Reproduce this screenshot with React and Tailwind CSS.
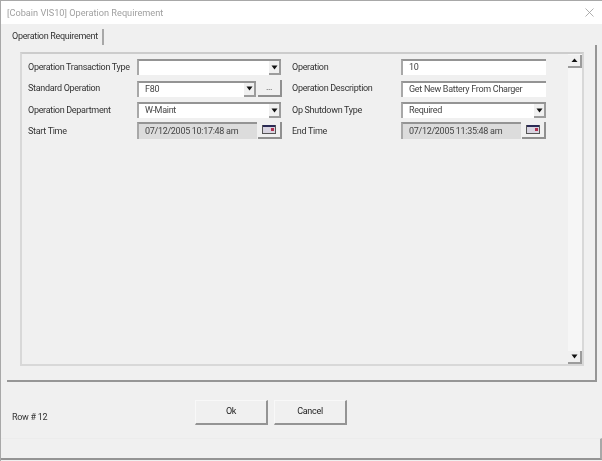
import React from "react";

const textCls = "whitespace-nowrap text-[9px] tracking-[-0.3px]";

const Arrow = ({ up }) => (
  <svg width="7" height="5" viewBox="0 0 7 5" className="block">
    {up ? <path d="M3.5 0.5 L6.5 4 L0.5 4 Z" fill="#111" /> : <path d="M0.5 0.5 L6.5 0.5 L3.5 4.5 Z" fill="#111" />}
  </svg>
);

const Label = ({ w, className = "pt-[1px]", children }) => (
  <div className={`${w} shrink-0 text-[#333] ${className} ${textCls}`}>{children}</div>
);

const Sunken = ({ className = "", children }) => (
  <div className={`h-[16px] shrink-0 flex items-center bg-white border-t-2 border-l-2 border-t-[#949494] border-l-[#a8a8a8] text-[#444] ${textCls} ${className}`}>
    {children}
  </div>
);

const ArrowBtn = () => (
  <div className="ml-auto w-[12px] h-[14px] flex items-center justify-center bg-[#f0f0f0] border-r-2 border-b-2 border-r-[#9c9c9c] border-b-[#9c9c9c]">
    <Arrow />
  </div>
);

const Combo = ({ w, value }) => (
  <Sunken className={w}>
    <span className="pl-[6px]">{value}</span>
    <ArrowBtn />
  </Sunken>
);

const Text = ({ value }) => (
  <Sunken className="w-[145px]">
    <span className="pl-[6px]">{value}</span>
  </Sunken>
);

const CalBtn = () => (
  <div className="ml-[1px] w-[24px] h-[17px] flex items-center justify-center bg-[#f0f0f0] border-r-2 border-b-2 border-r-[#909090] border-b-[#909090]">
    <svg width="14" height="9" viewBox="0 0 14 9" className="block">
      <rect x="0" y="0" width="14" height="9" fill="#d8d4e0" />
      <rect x="0" y="0" width="14" height="2" fill="#2a2a55" />
      <rect x="0" y="0" width="1" height="9" fill="#555" />
      <rect x="13" y="0" width="1" height="9" fill="#555" />
      <rect x="0" y="8" width="14" height="1" fill="#555" />
      <rect x="9" y="3" width="3" height="3" fill="#b03050" />
    </svg>
  </div>
);

const DateField = ({ value }) => (
  <div className="flex items-start">
    <div className={`w-[120px] h-[17px] flex items-center pl-[6px] bg-[#dcdcdc] border-t-2 border-l-2 border-t-[#949494] border-l-[#a8a8a8] text-[#444] ${textCls}`}>
      {value}
    </div>
    <CalBtn />
  </div>
);

const Row = ({ className = "", children }) => (
  <div className={`flex items-center ${className}`}>{children}</div>
);

const Button = ({ children, className = "" }) => (
  <div className={`w-[73px] h-[25px] flex items-center justify-center bg-[#f0f0f0] border-r-2 border-b-2 border-t border-l border-r-[#949494] border-b-[#949494] border-t-[#f8f8f8] border-l-[#f8f8f8] text-[#222] ${textCls} ${className}`}>
    {children}
  </div>
);

export default function App() {
  return (
    <div className="w-[602px] h-[461px] flex flex-col bg-[#f0f0f0] border-t border-l border-[#a8a8a8] font-['Roboto','Liberation_Sans',sans-serif] overflow-hidden blur-[0.3px]">
      <div className="h-[23px] shrink-0 flex items-center justify-between bg-white pl-[6px] pr-[8px]">
        <span className="text-[#a0a0a0] whitespace-nowrap text-[9.2px]">[Cobain VIS10] Operation Requirement</span>
        <svg width="9" height="9" viewBox="0 0 9 9" className="block">
          <path d="M0.5 0.5 L8.5 8.5 M8.5 0.5 L0.5 8.5" stroke="#9a9a9a" strokeWidth="0.8" fill="none" />
        </svg>
      </div>

      <div className="ml-[6px] mr-[5px] mt-[5px] h-[353px] shrink-0 flex flex-col">
        <div className="h-[16px] shrink-0 flex">
          <div className={`w-[97px] flex items-center pl-[5px] border-r-2 border-r-[#a8a8a8] text-[#333] ${textCls}`}>
            Operation Requirement
          </div>
        </div>
        <div className="flex-1 flex flex-col border-r-2 border-b-2 border-r-[#969696] border-b-[#969696] pl-[13px] pr-[11px] pt-[7px] pb-[14px]">
          <div className="flex-1 flex border-2 border-[#d8d8d8] border-t-[#cccccc]">
            <div className="flex-1 flex flex-col pl-[6px] pt-[5px]">
              <Row>
                <Label w="w-[109px]">Operation Transaction Type</Label>
                <Combo w="w-[144px]" value="" />
                <div className="w-[11px]" />
                <Label w="w-[109px]">Operation</Label>
                <Text value="10" />
              </Row>
              <Row className="mt-[5px]">
                <Label w="w-[109px]">Standard Operation</Label>
                <Combo w="w-[119px]" value="F80" />
                <div className={`ml-[2px] w-[24px] h-[17px] flex items-center justify-center bg-[#f0f0f0] border-r-2 border-b-2 border-r-[#909090] border-b-[#909090] text-[#333] ${textCls}`}>...</div>
                <div className="w-[10px]" />
                <Label w="w-[109px]">Operation Description</Label>
                <Text value="Get New Battery From Charger" />
              </Row>
              <Row className="mt-[5px]">
                <Label w="w-[109px]">Operation Department</Label>
                <Combo w="w-[144px]" value="W-Maint" />
                <div className="w-[11px]" />
                <Label w="w-[109px]">Op Shutdown Type</Label>
                <Combo w="w-[145px]" value="Required" />
              </Row>
              <Row className="mt-[4px]">
                <Label w="w-[109px]" className="pt-[3px]">Start Time</Label>
                <DateField value="07/12/2005 10:17:48 am" />
                <div className="w-[10px]" />
                <Label w="w-[109px]" className="pt-[3px]">End Time</Label>
                <DateField value="07/12/2005 11:35:48 am" />
              </Row>
            </div>
            <div className="w-[14px] shrink-0 flex flex-col justify-between bg-[#f6f6f6]">
              <div className="h-[13px] mt-[1px] flex items-center justify-center bg-[#f0f0f0] border-r-2 border-b-2 border-r-[#9c9c9c] border-b-[#9c9c9c]">
                <Arrow up />
              </div>
              <div className="h-[13px] flex items-center justify-center bg-[#f0f0f0] border-r-2 border-b-2 border-r-[#9c9c9c] border-b-[#9c9c9c]">
                <Arrow />
              </div>
            </div>
          </div>
        </div>
      </div>

      <div className="flex-1 flex flex-col">
        <div className="flex-1 flex items-start">
          <div className={`w-[194px] pl-[11px] pt-[29px] text-[#333] ${textCls}`}>Row # 12</div>
          <div className="flex gap-[6px] pt-[18px]">
            <Button>Ok</Button>
            <Button>Cancel</Button>
          </div>
        </div>
        <div className="h-[22px] mb-[1px] shrink-0 border-r-2 border-b-2 border-t border-t-[#ececec] border-r-[#a8a8a8] border-b-[#949494] bg-[#f0f0f0]" />
      </div>
    </div>
  );
}
